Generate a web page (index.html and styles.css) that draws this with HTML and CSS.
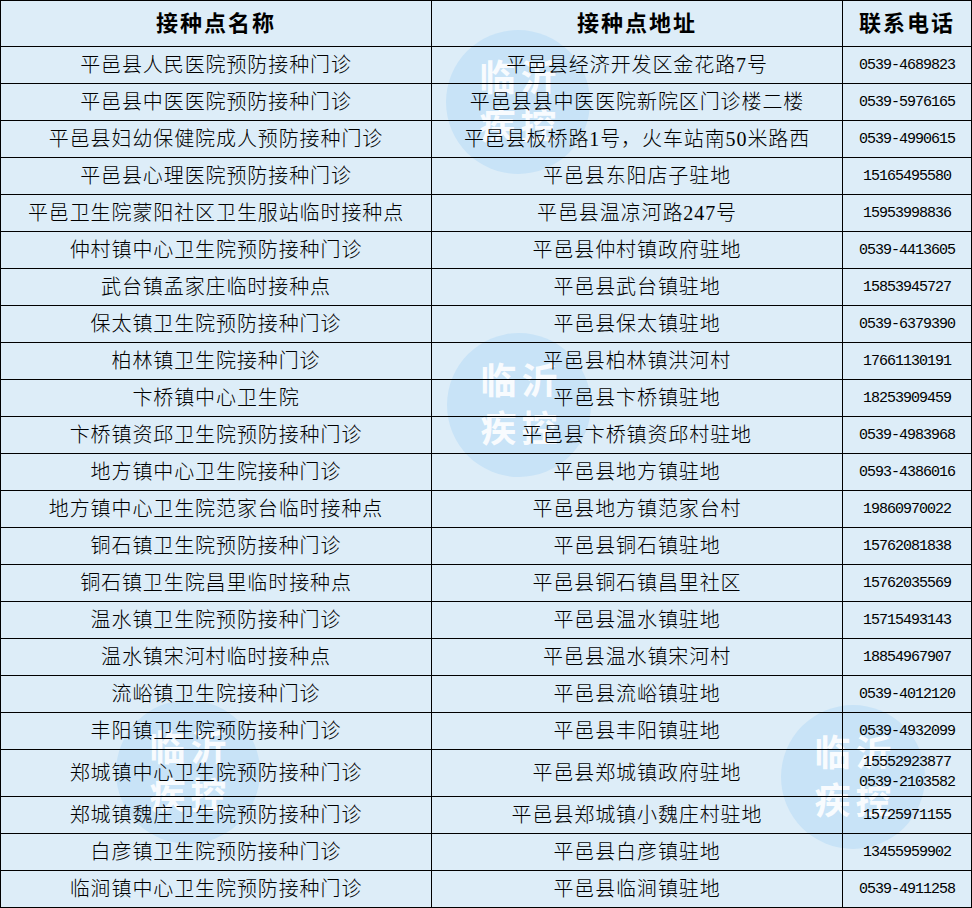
FILE: index.html
```html
<!DOCTYPE html>
<html lang="zh-CN">
<head>
<meta charset="utf-8">
<title>接种点列表</title>
<link rel="stylesheet" href="styles.css">
</head>
<body>
<div class="sheet">
  <div class="mark mark-1"><span>临沂</span><span>疾控</span></div>
  <div class="mark mark-2"><span>临沂</span><span>疾控</span></div>
  <div class="mark mark-3"><span>临沂</span><span>疾控</span></div>
  <div class="mark mark-4"><span>临沂</span><span>疾控</span></div>
  <table class="grid">
    <colgroup>
      <col class="c-name">
      <col class="c-addr">
      <col class="c-tel">
    </colgroup>
    <thead>
      <tr class="head"><th>接种点名称</th><th>接种点地址</th><th>联系电话</th></tr>
    </thead>
    <tbody>
      <tr><td>平邑县人民医院预防接种门诊</td><td>平邑县经济开发区金花路7号</td><td class="tel">0539-4689823</td></tr>
      <tr><td>平邑县中医医院预防接种门诊</td><td>平邑县县中医医院新院区门诊楼二楼</td><td class="tel">0539-5976165</td></tr>
      <tr><td>平邑县妇幼保健院成人预防接种门诊</td><td>平邑县板桥路1号，火车站南50米路西</td><td class="tel">0539-4990615</td></tr>
      <tr><td>平邑县心理医院预防接种门诊</td><td>平邑县东阳店子驻地</td><td class="tel">15165495580</td></tr>
      <tr><td>平邑卫生院蒙阳社区卫生服站临时接种点</td><td>平邑县温凉河路247号</td><td class="tel">15953998836</td></tr>
      <tr><td>仲村镇中心卫生院预防接种门诊</td><td>平邑县仲村镇政府驻地</td><td class="tel">0539-4413605</td></tr>
      <tr><td>武台镇孟家庄临时接种点</td><td>平邑县武台镇驻地</td><td class="tel">15853945727</td></tr>
      <tr><td>保太镇卫生院预防接种门诊</td><td>平邑县保太镇驻地</td><td class="tel">0539-6379390</td></tr>
      <tr><td>柏林镇卫生院接种门诊</td><td>平邑县柏林镇洪河村</td><td class="tel">17661130191</td></tr>
      <tr><td>卞桥镇中心卫生院</td><td>平邑县卞桥镇驻地</td><td class="tel">18253909459</td></tr>
      <tr><td>卞桥镇资邱卫生院预防接种门诊</td><td>平邑县卞桥镇资邱村驻地</td><td class="tel">0539-4983968</td></tr>
      <tr><td>地方镇中心卫生院接种门诊</td><td>平邑县地方镇驻地</td><td class="tel">0593-4386016</td></tr>
      <tr><td>地方镇中心卫生院范家台临时接种点</td><td>平邑县地方镇范家台村</td><td class="tel">19860970022</td></tr>
      <tr><td>铜石镇卫生院预防接种门诊</td><td>平邑县铜石镇驻地</td><td class="tel">15762081838</td></tr>
      <tr><td>铜石镇卫生院昌里临时接种点</td><td>平邑县铜石镇昌里社区</td><td class="tel">15762035569</td></tr>
      <tr><td>温水镇卫生院预防接种门诊</td><td>平邑县温水镇驻地</td><td class="tel">15715493143</td></tr>
      <tr><td>温水镇宋河村临时接种点</td><td>平邑县温水镇宋河村</td><td class="tel">18854967907</td></tr>
      <tr><td>流峪镇卫生院接种门诊</td><td>平邑县流峪镇驻地</td><td class="tel">0539-4012120</td></tr>
      <tr><td>丰阳镇卫生院预防接种门诊</td><td>平邑县丰阳镇驻地</td><td class="tel">0539-4932099</td></tr>
      <tr class="tall"><td>郑城镇中心卫生院预防接种门诊</td><td>平邑县郑城镇政府驻地</td><td class="tel two">15552923877<br>0539-2103582</td></tr>
      <tr><td>郑城镇魏庄卫生院预防接种门诊</td><td>平邑县郑城镇小魏庄村驻地</td><td class="tel">15725971155</td></tr>
      <tr><td>白彦镇卫生院预防接种门诊</td><td>平邑县白彦镇驻地</td><td class="tel">13455959902</td></tr>
      <tr><td>临涧镇中心卫生院预防接种门诊</td><td>平邑县临涧镇驻地</td><td class="tel">0539-4911258</td></tr>
    </tbody>
  </table>
</div>
</body>
</html>
```
FILE: styles.css
```css
html, body {
  margin: 0;
  padding: 0;
  background: #ffffff;
}

.sheet {
  position: relative;
  width: 972px;
  height: 908px;
  background: #ddedf8;
  overflow: hidden;
}

.mark {
  position: absolute;
  width: 144px;
  height: 144px;
  border-radius: 50%;
  background: #c8e3f7;
  z-index: 0;
  display: flex;
  flex-direction: column;
  align-items: center;
  justify-content: center;
  padding-bottom: 6px;
  box-sizing: border-box;
  color: rgba(255, 255, 255, 0.88);
  font-family: "Noto Sans CJK SC", sans-serif;
  font-weight: 700;
  font-size: 36px;
  line-height: 48px;
  letter-spacing: 5px;
}

.mark span {
  display: block;
  padding-left: 5px;
}

.mark-1 { left: 446px; top: 30px; }
.mark-2 { left: 447px; top: 333px; }
.mark-3 { left: 116px; top: 700px; }
.mark-4 { left: 781px; top: 705px; }

.grid {
  position: relative;
  z-index: 1;
  border-collapse: collapse;
  table-layout: fixed;
  width: 971px;
  font-family: "Liberation Serif", "Noto Sans CJK SC", serif;
  color: #000;
}

.c-name { width: 431px; }
.c-addr { width: 411px; }
.c-tel { width: 129px; }

.grid th,
.grid td {
  border: 1px solid #000;
  padding: 0;
  text-align: center;
  vertical-align: middle;
  white-space: nowrap;
  background: transparent;
}

.grid th {
  font-size: 22px;
  font-weight: 700;
  letter-spacing: 2px;
  height: 45px;
  line-height: 20px;
}

.grid td {
  font-size: 20px;
  font-weight: 300;
  letter-spacing: 0.9px;
  height: 34px;
  line-height: 18px;
}

.grid tr.tall td {
  height: 46px;
}

.grid td.tel {
  font-family: "Liberation Mono", monospace;
  font-size: 15px;
  font-weight: 400;
  letter-spacing: -1px;
  line-height: 18px;
  padding-top: 2px;
}

.grid td.tel.two {
  padding-top: 0;
  line-height: 20px;
}
```
